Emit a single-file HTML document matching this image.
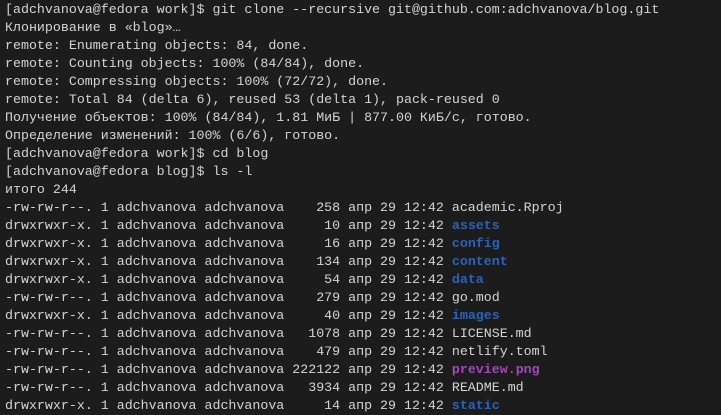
<!DOCTYPE html>
<html><head><meta charset="utf-8"><style>
html,body{margin:0;padding:0;background:#1c1c1c;width:721px;height:414px;overflow:hidden}
pre{margin:0;position:absolute;left:5px;top:1px;font-family:"Liberation Mono","DejaVu Sans Mono",monospace;font-size:13.3px;line-height:18px;color:#d4d4d4}
.b{color:#2a63b8;font-weight:bold}.p{color:#a347ba;font-weight:bold}
</style></head><body><pre>[adchvanova@fedora work]$ git clone --recursive git@github.com:adchvanova/blog.git
Клонирование в «blog»…
remote: Enumerating objects: 84, done.
remote: Counting objects: 100% (84/84), done.
remote: Compressing objects: 100% (72/72), done.
remote: Total 84 (delta 6), reused 53 (delta 1), pack-reused 0
Получение объектов: 100% (84/84), 1.81 МиБ | 877.00 КиБ/с, готово.
Определение изменений: 100% (6/6), готово.
[adchvanova@fedora work]$ cd blog
[adchvanova@fedora blog]$ ls -l
итого 244
-rw-rw-r--. 1 adchvanova adchvanova    258 апр 29 12:42 academic.Rproj
drwxrwxr-x. 1 adchvanova adchvanova     10 апр 29 12:42 <span class="b">assets</span>
drwxrwxr-x. 1 adchvanova adchvanova     16 апр 29 12:42 <span class="b">config</span>
drwxrwxr-x. 1 adchvanova adchvanova    134 апр 29 12:42 <span class="b">content</span>
drwxrwxr-x. 1 adchvanova adchvanova     54 апр 29 12:42 <span class="b">data</span>
-rw-rw-r--. 1 adchvanova adchvanova    279 апр 29 12:42 go.mod
drwxrwxr-x. 1 adchvanova adchvanova     40 апр 29 12:42 <span class="b">images</span>
-rw-rw-r--. 1 adchvanova adchvanova   1078 апр 29 12:42 LICENSE.md
-rw-rw-r--. 1 adchvanova adchvanova    479 апр 29 12:42 netlify.toml
-rw-rw-r--. 1 adchvanova adchvanova 222122 апр 29 12:42 <span class="p">preview.png</span>
-rw-rw-r--. 1 adchvanova adchvanova   3934 апр 29 12:42 README.md
drwxrwxr-x. 1 adchvanova adchvanova     14 апр 29 12:42 <span class="b">static</span>
</pre></body></html>
